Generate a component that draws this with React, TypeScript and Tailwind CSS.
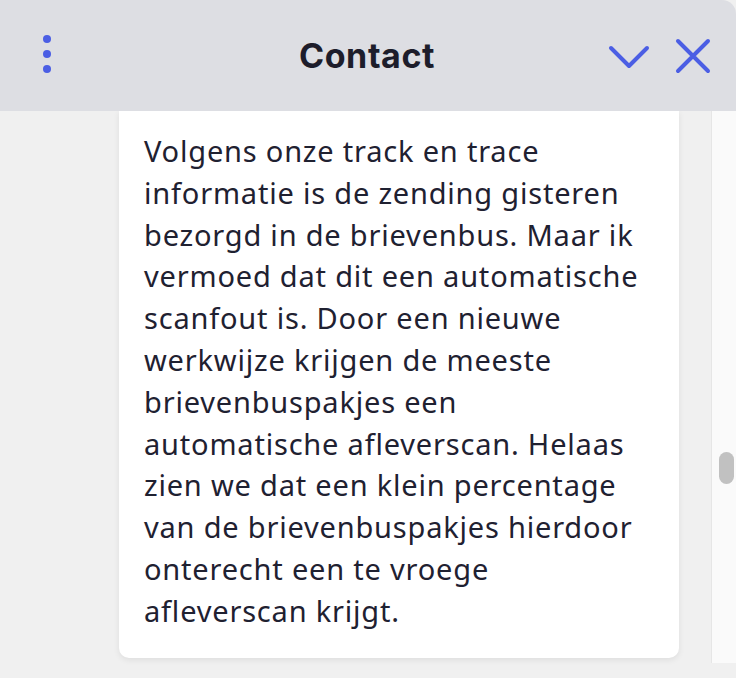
const lines = [
  "Volgens onze track en trace",
  "informatie is de zending gisteren",
  "bezorgd in de brievenbus. Maar ik",
  "vermoed dat dit een automatische",
  "scanfout is. Door een nieuwe",
  "werkwijze krijgen de meeste",
  "brievenbuspakjes een",
  "automatische afleverscan. Helaas",
  "zien we dat een klein percentage",
  "van de brievenbuspakjes hierdoor",
  "onterecht een te vroege",
  "afleverscan krijgt.",
];

export default function App() {
  return (
    <div className="w-[736px] h-[678px] bg-[#f0f0f0] flex flex-col overflow-hidden">
      <div className="h-[111px] shrink-0 bg-[#dddee3] rounded-tr-[14px] flex items-center relative">
        <div className="absolute left-[43px] top-[35px] flex flex-col gap-[7px]">
          <span className="w-[8px] h-[8px] rounded-full bg-[#4b5ee4]" />
          <span className="w-[8px] h-[8px] rounded-full bg-[#4b5ee4]" />
          <span className="w-[8px] h-[8px] rounded-full bg-[#4b5ee4]" />
        </div>
        <div className="w-full text-center text-[34px] font-bold tracking-[0.6px] text-[#1d1d2b] [font-family:Inter,sans-serif] pr-[2px]">
          Contact
        </div>
        <svg className="absolute left-[606px] top-[39px]" width="46" height="34" viewBox="0 0 46 34">
          <path d="M5 9 L23 27 L41 9" fill="none" stroke="#4b5ee4" strokeWidth="4" strokeLinecap="round" strokeLinejoin="round" />
        </svg>
        <svg className="absolute left-[674px] top-[37px]" width="38" height="38" viewBox="0 0 38 38">
          <path d="M4 4 L34 34 M34 4 L4 34" fill="none" stroke="#4b5ee4" strokeWidth="4" strokeLinecap="round" />
        </svg>
      </div>
      <div className="flex flex-1 min-h-0">
        <div className="flex-1">
          <div className="ml-[119px] w-[560px] bg-white rounded-b-[10px] shadow-[0_2px_6px_rgba(0,0,0,0.08)] pl-[25px] pr-[10px] pt-[19px] pb-[26px]">
            <div className="text-[29px] leading-[41.8px] tracking-[0.8px] text-[#1f2131] [font-family:'Noto_Sans',sans-serif] whitespace-nowrap">
              {lines.map((l, i) => (
                <div key={i}>{l}</div>
              ))}
            </div>
          </div>
        </div>
        <div className="w-[25px] h-[552px] border-l border-[#e6e6e6] bg-[#fafafa] relative">
          <div className="absolute left-[7px] top-[341px] w-[15px] h-[32px] rounded-full bg-[#c1c1c1]" />
        </div>
      </div>
    </div>
  );
}
